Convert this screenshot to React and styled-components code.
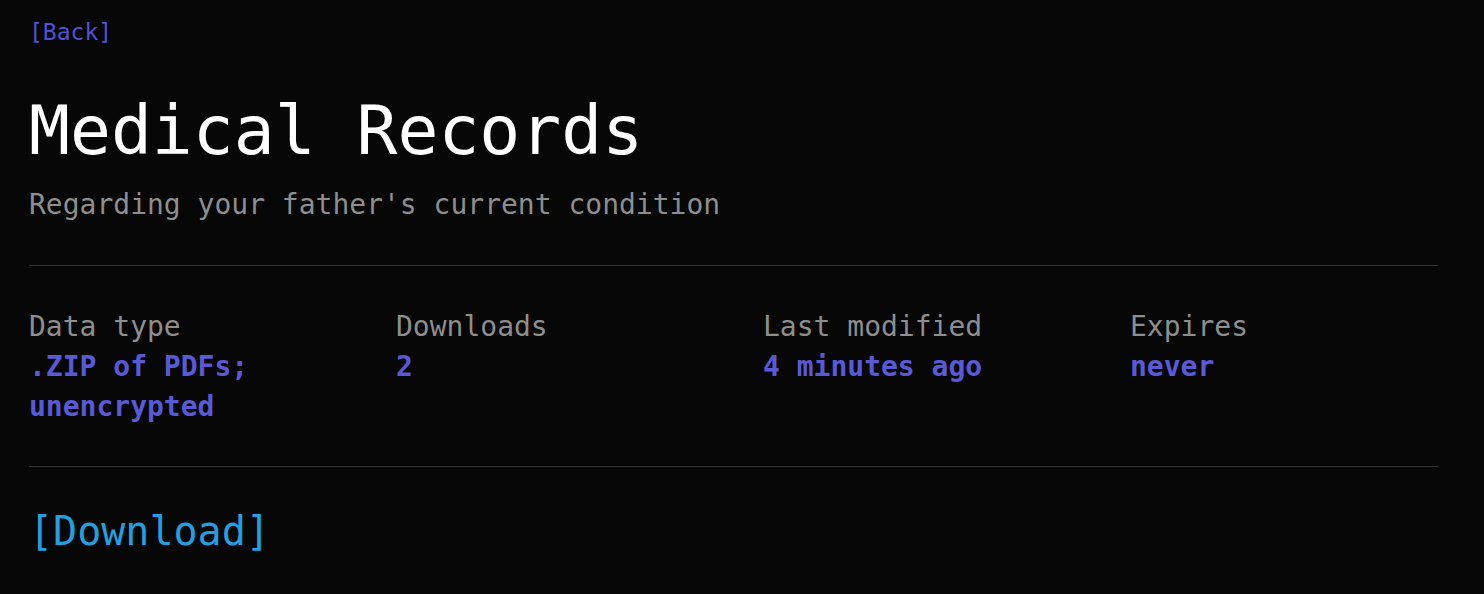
import React from 'react'
import styled, { createGlobalStyle } from 'styled-components'

const GlobalStyle = createGlobalStyle`
  html, body {
    margin: 0;
    padding: 0;
    background: #070707;
  }
  body {
    font-family: 'DejaVu Sans Mono', 'Liberation Mono', monospace;
    color: #ffffff;
  }
`

const details = [
  { label: 'Data type', value: '.ZIP of PDFs; unencrypted' },
  { label: 'Downloads', value: '2' },
  { label: 'Last modified', value: '4 minutes ago' },
  { label: 'Expires', value: 'never' },
]

export default function App() {
  return (
    <>
      <GlobalStyle />
      <PageStyled>
        <BackLink href="#">[Back]</BackLink>
        <TitleStyled>Medical Records</TitleStyled>
        <SubtitleStyled>Regarding your father's current condition</SubtitleStyled>
        <Divider $top={40} />
        <DetailsGrid>
          {details.map((item) => (
            <DetailItem key={item.label}>
              <DetailLabel>{item.label}</DetailLabel>
              <DetailValue>{item.value}</DetailValue>
            </DetailItem>
          ))}
        </DetailsGrid>
        <Divider />
        <DownloadLink href="#">[Download]</DownloadLink>
      </PageStyled>
    </>
  )
}

const PageStyled = styled.main`
  width: 1409px;
  padding: 18px 0 40px 29px;
  display: flex;
  flex-direction: column;
  align-items: flex-start;
`

const BackLink = styled.a`
  font-size: 23px;
  line-height: 28px;
  color: #5252d8;
  text-decoration: none;
`

const TitleStyled = styled.h1`
  margin: 45px 0 0;
  font-size: 68px;
  line-height: 80px;
  font-weight: 400;
  color: #ffffff;
`

const SubtitleStyled = styled.p`
  margin: 14px 0 0;
  font-size: 28px;
  line-height: 40px;
  color: #8e8e8e;
`

const Divider = styled.hr`
  align-self: stretch;
  margin: ${(p) => p.$top || 0}px 0 0;
  border: none;
  height: 1px;
  background: #333333;
`

const DetailsGrid = styled.section`
  align-self: stretch;
  display: grid;
  grid-template-columns: repeat(4, 308px);
  column-gap: 59px;
  padding: 41px 0 39px;
`

const DetailItem = styled.div`
  display: flex;
  flex-direction: column;
  font-size: 28px;
  line-height: 40px;
`

const DetailLabel = styled.span`
  color: #8e8e8e;
`

const DetailValue = styled.span`
  color: #5a5ad6;
  font-weight: 700;
`

const DownloadLink = styled.a`
  margin-top: 40px;
  font-size: 40px;
  line-height: 48px;
  color: #22a0e0;
  text-decoration: none;
`
